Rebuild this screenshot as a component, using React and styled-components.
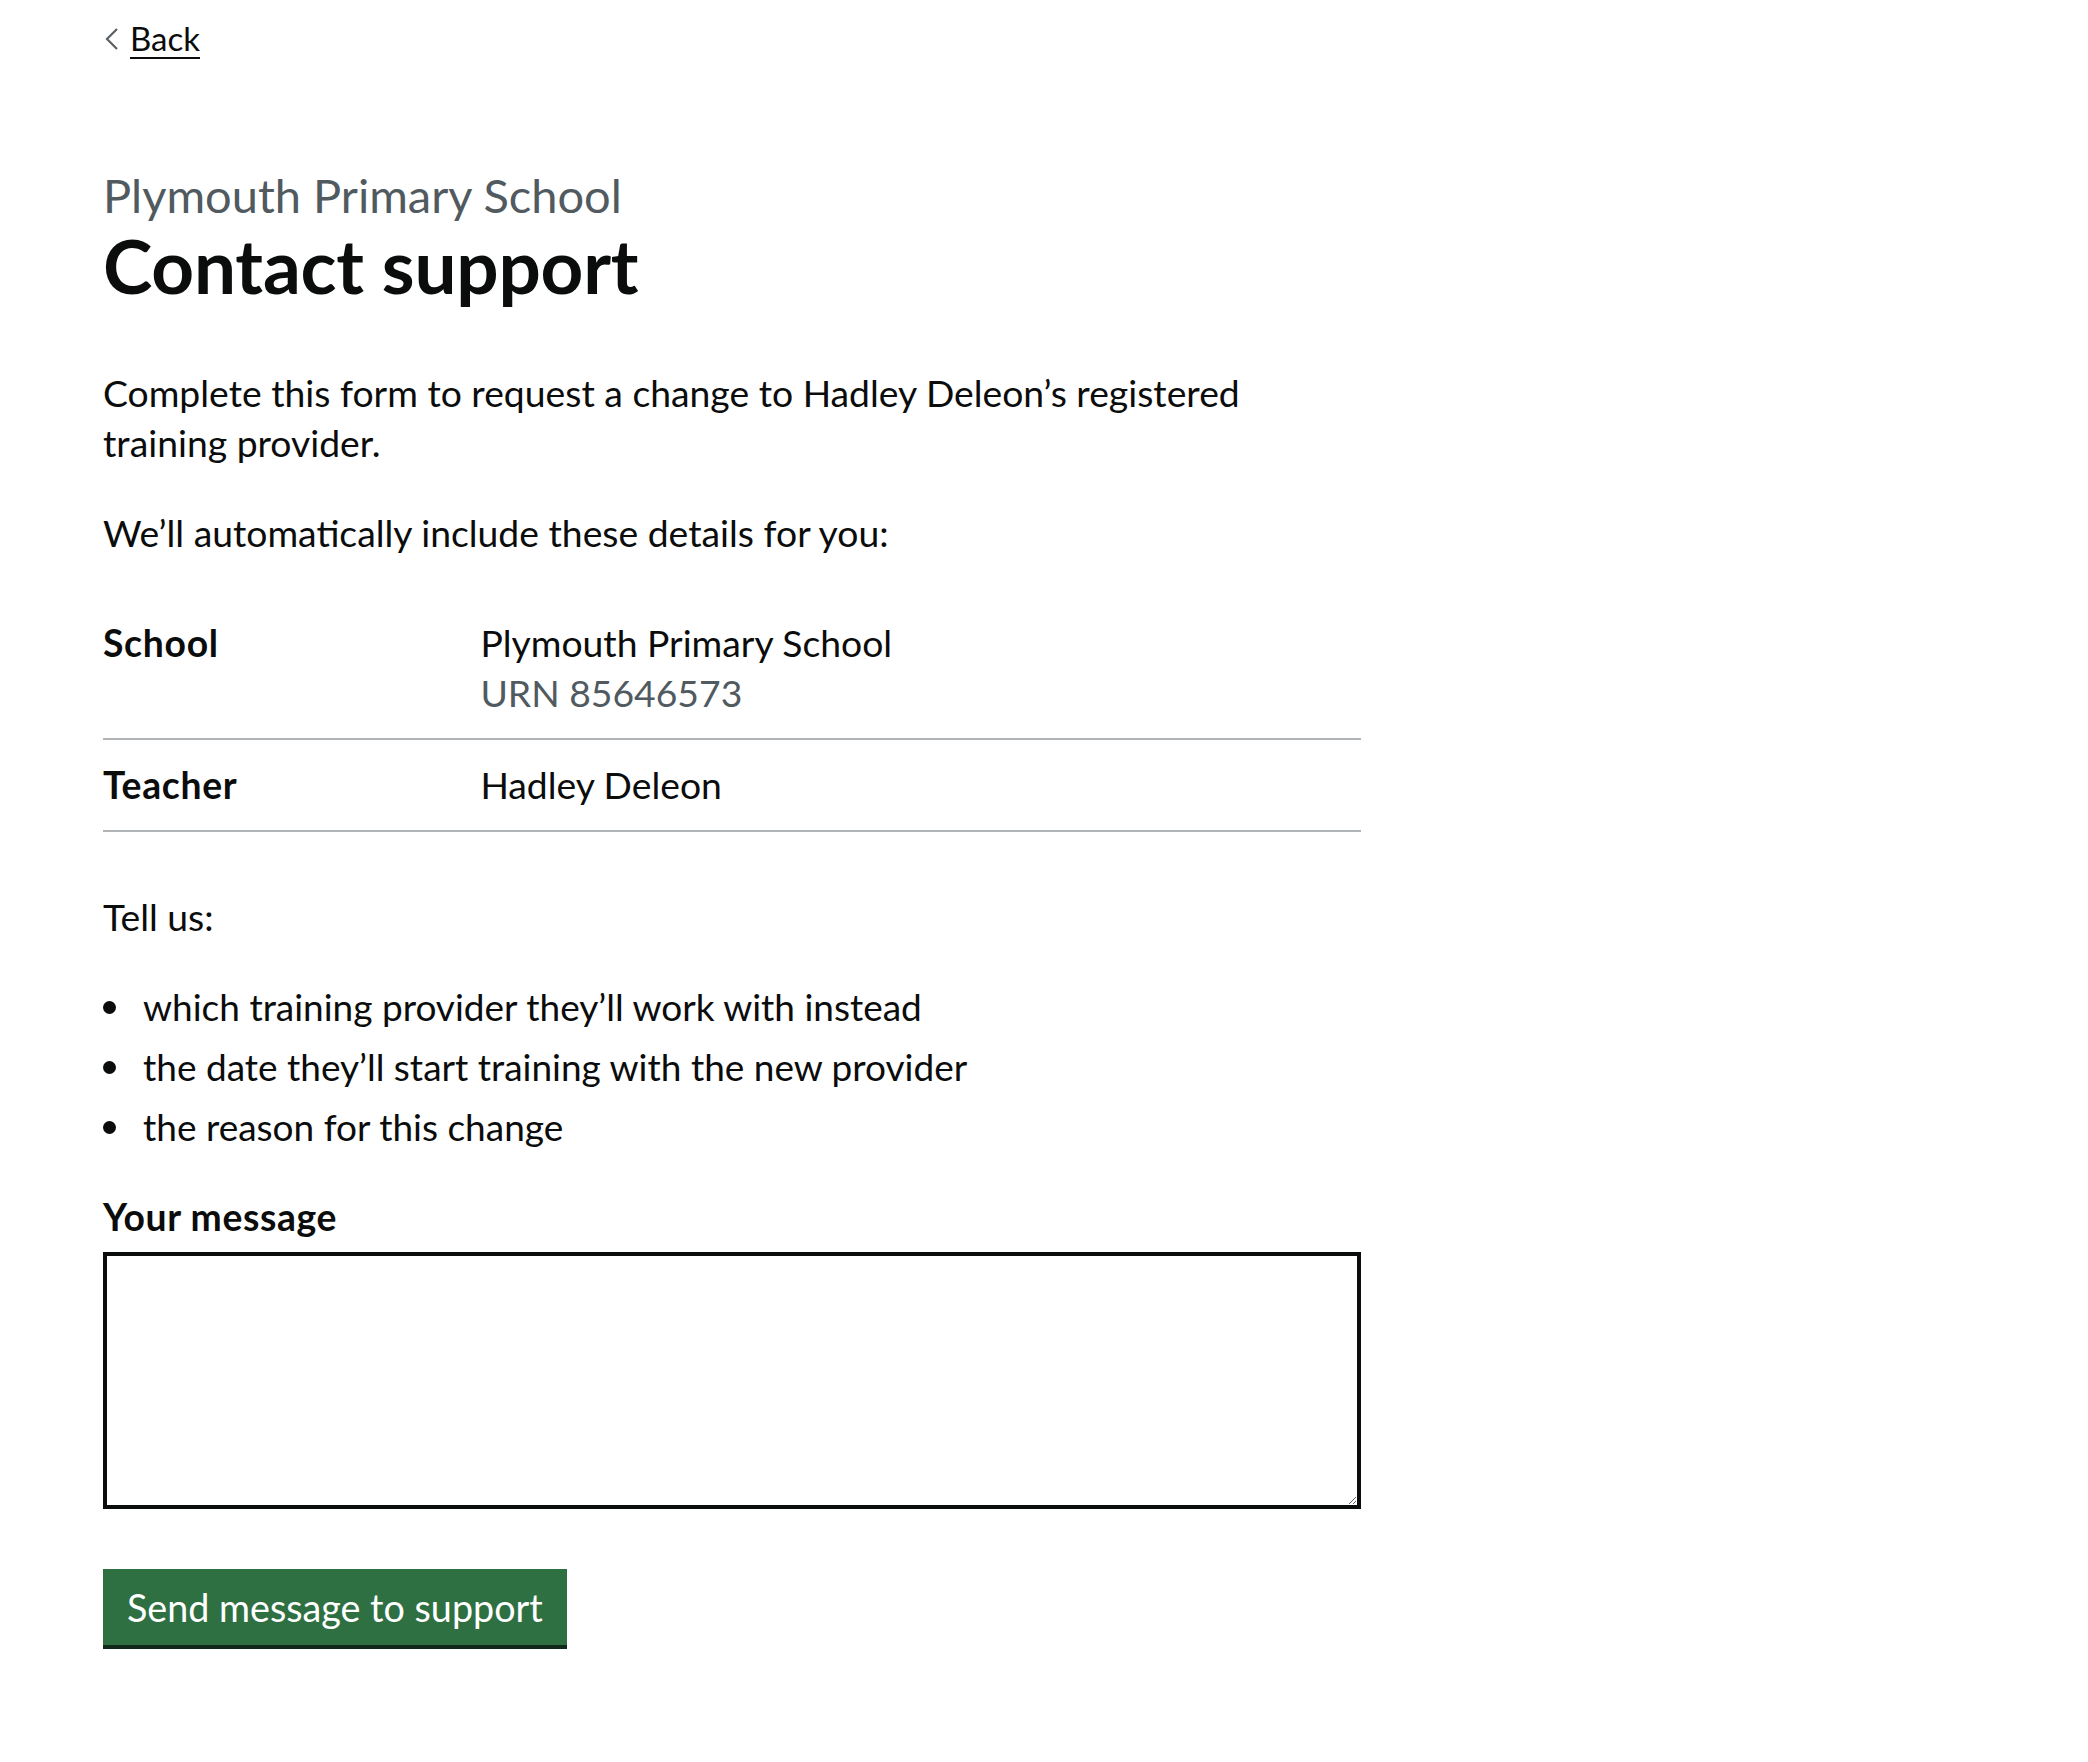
import React from 'react';
import styled, { createGlobalStyle } from 'styled-components';

const bodySize = '37.3px';

const GlobalStyle = createGlobalStyle`
	html,
	body {
		margin: 0;
		padding: 0;
		background: #ffffff;
	}

	body {
		font-family: Lato, "Noto Sans", sans-serif;
		color: #0b0c0c;
		-webkit-font-smoothing: antialiased;
	}
`;

const Page = styled.div`
	padding: 18px 0 100px 103px;
`;

const Main = styled.main`
	width: 1258px;
`;

const BackLink = styled.a`
	display: flex;
	align-items: center;
	gap: 10px;
	width: fit-content;
	margin-bottom: 107px;
	font-size: 33px;
	line-height: 40px;
	color: #0b0c0c;
	text-decoration: underline;
	text-decoration-thickness: 2px;
	text-underline-offset: 6px;
	cursor: pointer;
`;

const Chevron = styled.svg`
	width: 17px;
	height: 26px;
	flex: none;
	margin-top: 2px;
`;

const Caption = styled.span`
	display: block;
	font-size: 47px;
	line-height: 60px;
	color: #505a5f;
`;

const Heading = styled.h1`
	margin: 0 0 63px;
	font-size: 74.6px;
	line-height: 80px;
	font-weight: 700;
	letter-spacing: -0.2px;
`;

const Body = styled.p`
	margin: 0 0 40px;
	font-size: ${bodySize};
	line-height: 50px;
`;

const SummaryList = styled.dl`
	margin: 0 0 60px;
	font-size: ${bodySize};
	line-height: 50px;
`;

const SummaryRow = styled.div`
	display: grid;
	grid-template-columns: 30% 1fr;
	padding: 20px 0;
	border-bottom: 2px solid #b1b4b6;
`;

const SummaryKey = styled.dt`
	font-weight: 700;
	letter-spacing: 0.7px;
	padding-right: 40px;
`;

const SummaryValue = styled.dd`
	margin: 0;
`;

const Secondary = styled.span`
	display: block;
	color: #505a5f;
`;

const BulletList = styled.ul`
	margin: 0 0 40px;
	padding: 0;
	list-style: none;
	font-size: 37px;
	line-height: 50px;
`;

const BulletItem = styled.li`
	display: grid;
	grid-template-columns: 40px 1fr;
	align-items: center;
	margin-bottom: 10px;

	&::before {
		content: '';
		width: 13px;
		height: 13px;
		border-radius: 50%;
		background: #0b0c0c;
	}
`;

const Label = styled.label`
	display: block;
	margin-bottom: 10px;
	font-size: ${bodySize};
	line-height: 50px;
	font-weight: 700;
	letter-spacing: 0.6px;
`;

const MessageBox = styled.textarea`
	display: block;
	box-sizing: border-box;
	width: 100%;
	height: 257px;
	margin: 0 0 60px;
	padding: 10px;
	border: 4px solid #0b0c0c;
	border-radius: 0;
	font-family: inherit;
	font-size: ${bodySize};
	line-height: 50px;
	color: #0b0c0c;
	resize: vertical;
	outline: none;
`;

const SubmitButton = styled.button`
	display: inline-block;
	padding: 16px 20px 14px;
	border: 4px solid transparent;
	border-radius: 0;
	background: #2f7043;
	box-shadow: 0 4px 0 #10291a;
	color: #ffffff;
	font-family: inherit;
	font-size: 37.7px;
	line-height: 38px;
	cursor: pointer;
`;

const details = [
	{ key: 'School', value: 'Plymouth Primary School', extra: 'URN 85646573' },
	{ key: 'Teacher', value: 'Hadley Deleon' },
];

const asks = [
	'which training provider they\u2019ll work with instead',
	'the date they\u2019ll start training with the new provider',
	'the reason for this change',
];

export default function App() {
	return (
		<Page>
			<GlobalStyle />

			<BackLink href="#">
				<Chevron viewBox="0 0 17 26">
					<polyline points="14,3 4,13 14,23" fill="none" stroke="#5b6166" strokeWidth="2.2" />
				</Chevron>
				Back
			</BackLink>

			<Main>
				<Caption>Plymouth Primary School</Caption>
				<Heading>Contact support</Heading>

				<Body>
					Complete this form to request a change to Hadley Deleon’s registered training provider.
				</Body>
				<Body>We’ll automatically include these details for you:</Body>

				<SummaryList>
					{details.map((row) => (
						<SummaryRow key={row.key}>
							<SummaryKey>{row.key}</SummaryKey>
							<SummaryValue>
								{row.value}
								{row.extra && <Secondary>{row.extra}</Secondary>}
							</SummaryValue>
						</SummaryRow>
					))}
				</SummaryList>

				<Body>Tell us:</Body>
				<BulletList>
					{asks.map((item) => (
						<BulletItem key={item}>{item}</BulletItem>
					))}
				</BulletList>

				<form onSubmit={(e) => e.preventDefault()}>
					<Label htmlFor="message">Your message</Label>
					<MessageBox id="message" name="message" rows={5} />
					<SubmitButton type="submit">Send message to support</SubmitButton>
				</form>
			</Main>
		</Page>
	);
}
